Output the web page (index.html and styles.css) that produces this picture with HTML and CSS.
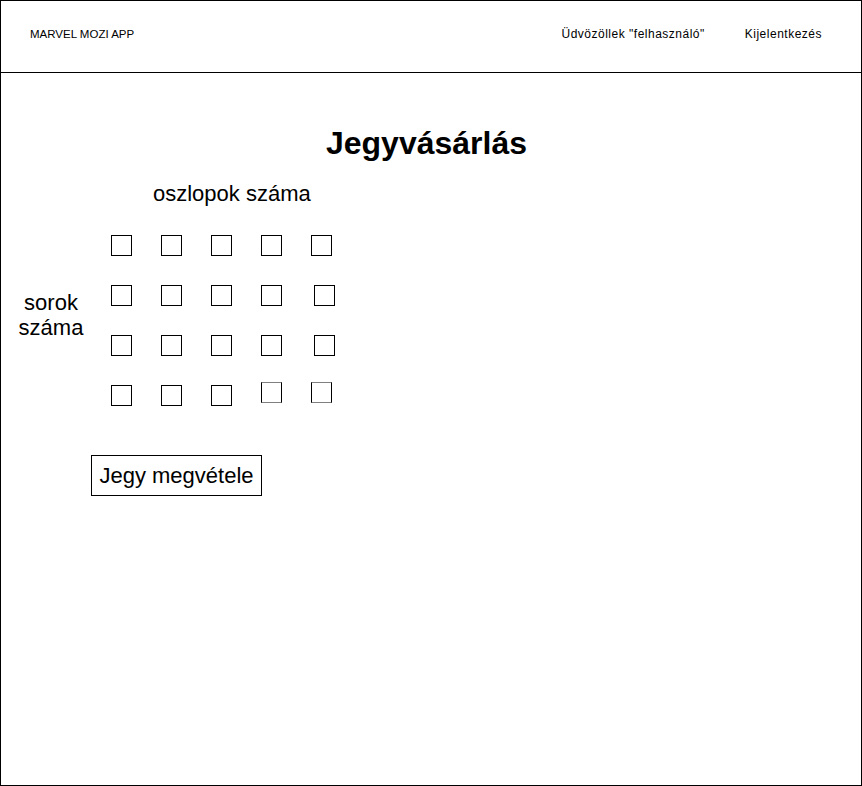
FILE: index.html
```html
<!DOCTYPE html>
<html lang="hu">

<head>
  <meta charset="UTF-8" />
  <meta name="viewport" content="width=device-width, initial-scale=1" />
  <title>Marvel Mozi App - Jegyvásárlás</title>
  <link rel="stylesheet" href="styles.css">
</head>

<body>
  <div class="frame">
    <header class="topbar">
      <div class="brand">MARVEL MOZI APP</div>
      <nav class="user-nav">
        <span class="greeting">Üdvözöllek "felhasználó"</span>
        <a class="logout" href="#">Kijelentkezés</a>
      </nav>
    </header>

    <main class="content">
      <h1 class="page-title">Jegyvásárlás</h1>

      <form class="ticket-form">
        <div class="seating">
          <div class="cols-label">oszlopok száma</div>
          <div class="rows-label">sorok<br>száma</div>

          <div class="seats">
            <input type="checkbox" class="seat" aria-label="1. sor 1. hely" />
            <input type="checkbox" class="seat" aria-label="1. sor 2. hely" />
            <input type="checkbox" class="seat" aria-label="1. sor 3. hely" />
            <input type="checkbox" class="seat" aria-label="1. sor 4. hely" />
            <input type="checkbox" class="seat" aria-label="1. sor 5. hely" />

            <input type="checkbox" class="seat" aria-label="2. sor 1. hely" />
            <input type="checkbox" class="seat" aria-label="2. sor 2. hely" />
            <input type="checkbox" class="seat" aria-label="2. sor 3. hely" />
            <input type="checkbox" class="seat" aria-label="2. sor 4. hely" />
            <input type="checkbox" class="seat seat--shift" aria-label="2. sor 5. hely" />

            <input type="checkbox" class="seat" aria-label="3. sor 1. hely" />
            <input type="checkbox" class="seat" aria-label="3. sor 2. hely" />
            <input type="checkbox" class="seat" aria-label="3. sor 3. hely" />
            <input type="checkbox" class="seat" aria-label="3. sor 4. hely" />
            <input type="checkbox" class="seat seat--shift" aria-label="3. sor 5. hely" />

            <input type="checkbox" class="seat" aria-label="4. sor 1. hely" />
            <input type="checkbox" class="seat" aria-label="4. sor 2. hely" />
            <input type="checkbox" class="seat" aria-label="4. sor 3. hely" />
            <input type="checkbox" class="seat seat--raised" aria-label="4. sor 4. hely" />
            <input type="checkbox" class="seat seat--raised" aria-label="4. sor 5. hely" />
          </div>
        </div>

        <button type="submit" class="buy-button">Jegy megvétele</button>
      </form>
    </main>
  </div>
</body>

</html>
```

FILE: styles.css
```css
body {
  margin: 0;
  padding: 0;
  background: #ffffff;
  color: #000000;
  font-family: 'Liberation Sans', Arial, sans-serif;
}

.frame {
  width: 862px;
  height: 786px;
  box-sizing: border-box;
  border: 1px solid #000000;
}

/* header */

.topbar {
  height: 72px;
  box-sizing: border-box;
  border-bottom: 1px solid #000000;
  display: flex;
  align-items: center;
  padding: 0 39px 5px 29px;
}

.brand {
  font-size: 11.5px;
}

.user-nav {
  margin-left: auto;
  display: flex;
  gap: 40px;
  font-size: 12px;
  letter-spacing: 0.5px;
}

.logout {
  color: #000000;
  text-decoration: none;
}

/* content */

.content {
  padding-top: 52px;
}

.page-title {
  margin: 0;
  padding-right: 9px;
  text-align: center;
  font-size: 32px;
  line-height: 37px;
  font-weight: bold;
}

.ticket-form {
  margin-top: 19px;
}

.seating {
  display: grid;
  grid-template-columns: 110px auto;
  row-gap: 29px;
  font-size: 22px;
  line-height: 25px;
}

.cols-label {
  grid-column: 2;
  padding-left: 42px;
}

.rows-label {
  grid-column: 1;
  padding: 55px 10px 0 0;
  text-align: center;
}

.seats {
  display: grid;
  grid-template-columns: repeat(5, 21px);
  grid-auto-rows: 21px;
  gap: 29px;
  align-items: start;
}

.seat {
  appearance: none;
  -webkit-appearance: none;
  width: 21px;
  height: 21px;
  margin: 0;
  box-sizing: border-box;
  border: 1px solid #000000;
  background: #ffffff;
  cursor: pointer;
}

.seat:checked {
  background: #000000;
}

.seat--shift {
  margin-left: 3px;
}

.seat--raised {
  margin-top: -3px;
  border-top-color: #7f7f7f;
  border-bottom-color: #7f7f7f;
}

.buy-button {
  display: block;
  width: 171px;
  height: 41px;
  margin: 49px 0 0 90px;
  padding: 0;
  box-sizing: border-box;
  border: 1px solid #000000;
  background: #ffffff;
  color: #000000;
  font-family: 'Liberation Sans', Arial, sans-serif;
  font-size: 22px;
  cursor: pointer;
}
```
